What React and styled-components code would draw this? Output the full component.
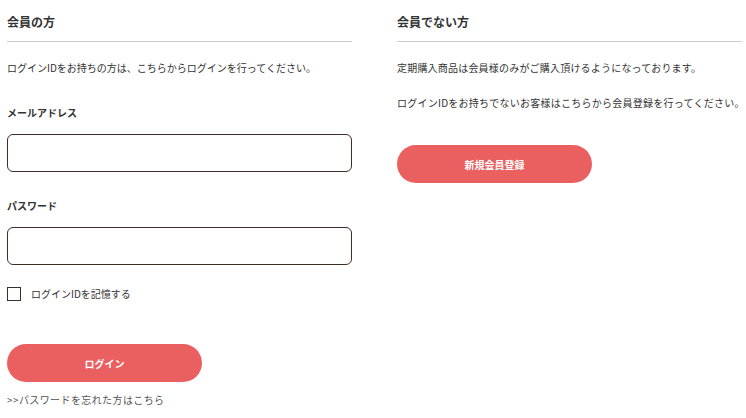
import React from "react";
import styled, { createGlobalStyle } from "styled-components";

const GlobalStyle = createGlobalStyle`
  body {
    margin: 0;
    background: #fff;
    font-family: "Noto Sans CJK JP", "Noto Sans", sans-serif;
    color: #333;
  }
`;

const Page = styled.div`
  display: grid;
  grid-template-columns: 345px 345px;
  column-gap: 45px;
  padding-left: 7px;
`;

const Column = styled.section`
  display: flex;
  flex-direction: column;
  align-items: flex-start;
`;

const Heading = styled.h2`
  align-self: stretch;
  margin: 12px 0 0;
  padding-bottom: 9px;
  font-size: 12px;
  line-height: 20px;
  font-weight: bold;
  color: #333;
  border-bottom: 1px solid #cccccc;
`;

const Text = styled.p`
  margin: ${(p) => p.$top || 0}px 0 0;
  font-size: 10px;
  line-height: 20px;
  letter-spacing: ${(p) => p.$spacing || 0}px;
  color: #333;
  white-space: nowrap;
`;

const Label = styled.label`
  display: block;
  margin-top: ${(p) => p.$top}px;
  font-size: 10px;
  line-height: 20px;
  font-weight: bold;
  color: #333;
`;

const Input = styled.input`
  box-sizing: border-box;
  align-self: stretch;
  margin-top: 11px;
  height: 38px;
  border: 1px solid #3d2f28;
  border-radius: 6px;
  background: #fff;
  outline: none;
`;

const CheckRow = styled.label`
  display: flex;
  align-items: center;
  gap: 10px;
  margin-top: 19px;
  font-size: 10px;
  line-height: 20px;
  color: #333;
`;

const Box = styled.span`
  box-sizing: border-box;
  width: 14px;
  height: 14px;
  border: 1px solid #3d2f28;
  background: #fff;
`;

const Button = styled.button`
  margin-top: ${(p) => p.$top}px;
  width: 195px;
  height: 38px;
  border: none;
  border-radius: 19px;
  background: #ea6060;
  color: #fff;
  font-family: inherit;
  font-size: 10px;
  font-weight: bold;
  cursor: pointer;
`;

const Link = styled.a`
  margin-top: 8px;
  font-size: 10px;
  line-height: 20px;
  letter-spacing: 0.4px;
  color: #555;
  text-decoration: none;
`;

export default function App() {
  return (
    <>
      <GlobalStyle />
      <Page>
        <Column>
          <Heading>会員の方</Heading>
          <Text $top={16}>ログインIDをお持ちの方は、こちらからログインを行ってください。</Text>
          <Label $top={25}>メールアドレス</Label>
          <Input type="email" />
          <Label $top={24}>パスワード</Label>
          <Input type="password" />
          <CheckRow>
            <Box />
            ログインIDを記憶する
          </CheckRow>
          <Button $top={40}>ログイン</Button>
          <Link href="#">&gt;&gt;パスワードを忘れた方はこちら</Link>
        </Column>
        <Column>
          <Heading>会員でない方</Heading>
          <Text $top={16} $spacing={0.2}>
            定期購入商品は会員様のみがご購入頂けるようになっております。
          </Text>
          <Text $top={15} $spacing={0.25}>
            ログインIDをお持ちでないお客様はこちらから会員登録を行ってください。
          </Text>
          <Button $top={32}>新規会員登録</Button>
        </Column>
      </Page>
    </>
  );
}
